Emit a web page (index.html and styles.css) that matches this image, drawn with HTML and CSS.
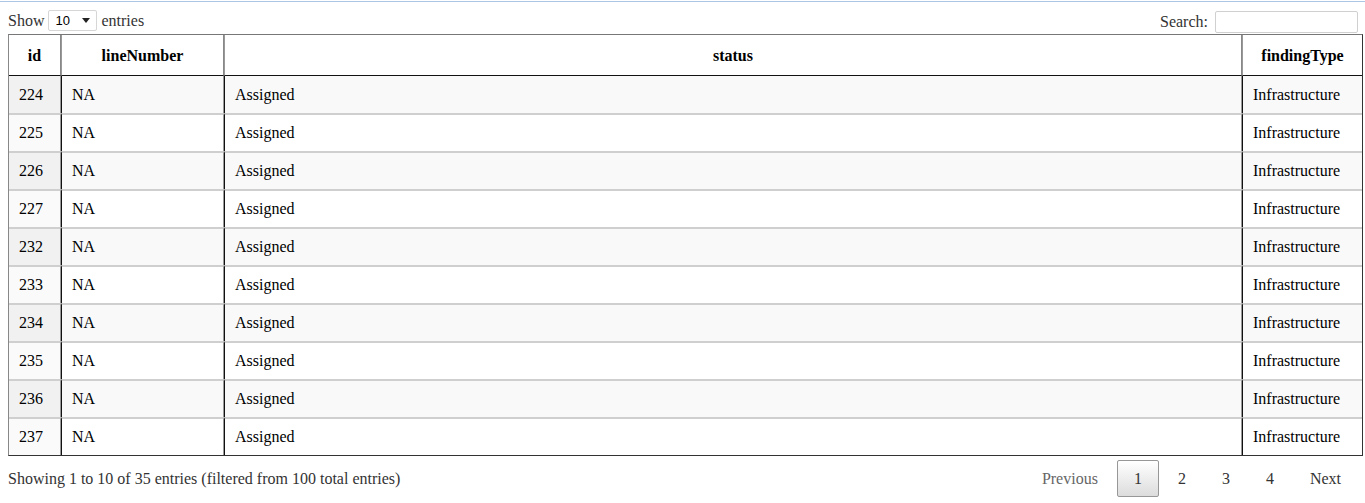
FILE: index.html
```html
<!DOCTYPE html>
<html>
<head>
<meta charset="utf-8">
<link rel="stylesheet" href="styles.css">
</head>
<body>
<div class="topline"></div>
<div class="wrap">
  <div class="controls">
    <div class="length">Show <span class="select"><span class="sel-val">10</span><svg class="caret" width="8" height="5" viewBox="0 0 8 5"><path d="M0 0H8L4 5Z" fill="#222"/></svg></span> entries</div>
    <div class="search">Search: <span class="input"></span></div>
  </div>
  <table class="dt">
    <colgroup>
      <col class="c1"><col class="c2"><col class="c3"><col class="c4">
    </colgroup>
    <thead>
      <tr><th>id</th><th>lineNumber</th><th>status</th><th>findingType</th></tr>
    </thead>
    <tbody>
      <tr class="odd"><td>224</td><td>NA</td><td>Assigned</td><td>Infrastructure</td></tr>
      <tr class="even"><td>225</td><td>NA</td><td>Assigned</td><td>Infrastructure</td></tr>
      <tr class="odd"><td>226</td><td>NA</td><td>Assigned</td><td>Infrastructure</td></tr>
      <tr class="even"><td>227</td><td>NA</td><td>Assigned</td><td>Infrastructure</td></tr>
      <tr class="odd"><td>232</td><td>NA</td><td>Assigned</td><td>Infrastructure</td></tr>
      <tr class="even"><td>233</td><td>NA</td><td>Assigned</td><td>Infrastructure</td></tr>
      <tr class="odd"><td>234</td><td>NA</td><td>Assigned</td><td>Infrastructure</td></tr>
      <tr class="even"><td>235</td><td>NA</td><td>Assigned</td><td>Infrastructure</td></tr>
      <tr class="odd"><td>236</td><td>NA</td><td>Assigned</td><td>Infrastructure</td></tr>
      <tr class="even"><td>237</td><td>NA</td><td>Assigned</td><td>Infrastructure</td></tr>
    </tbody>
  </table>
  <div class="footer">
    <div class="info">Showing 1 to 10 of 35 entries (filtered from 100 total entries)</div>
    <div class="paginate">
      <span class="pbtn disabled">Previous</span>
      <span class="pbtn current">1</span>
      <span class="pbtn">2</span>
      <span class="pbtn">3</span>
      <span class="pbtn">4</span>
      <span class="pbtn">Next</span>
    </div>
  </div>
</div>
</body>
</html>
```

FILE: styles.css
```css
html, body {
  margin: 0;
  padding: 0;
  background: #fff;
}
body {
  font-family: "Liberation Serif", "Times New Roman", serif;
  font-size: 16px;
  color: #111;
}
.topline {
  height: 1px;
  margin-top: 1px;
  background: #abc6e5;
}
.wrap {
  margin-left: 8px;
  width: 1355px;
}
.controls {
  display: flex;
  justify-content: space-between;
  align-items: center;
  height: 32px;
  padding-top: 0;
}
.length {
  display: flex;
  align-items: center;
  gap: 4px;
  color: #333;
  margin-top: 5px;
}
.select {
  display: inline-flex;
  align-items: center;
  justify-content: space-between;
  box-sizing: border-box;
  width: 49px;
  height: 21px;
  border: 1px solid #d6d6d6;
  border-radius: 2px;
  padding: 0 6px 0 6px;
  font-family: "Liberation Sans", Arial, sans-serif;
  font-size: 13px;
  color: #000;
}
.search {
  display: flex;
  align-items: center;
  gap: 7px;
  color: #333;
  margin-top: 8px;
  margin-right: 5px;
}
.input {
  display: inline-block;
  box-sizing: border-box;
  width: 143px;
  height: 22px;
  border: 1px solid #d0d0d0;
  border-radius: 2px;
}
.dt {
  width: 1355px;
  table-layout: fixed;
  border-collapse: separate;
  border-spacing: 0;
  border-top: 1px solid #777;
  border-left: 1px solid #888;
  border-right: 1px solid #333;
  border-bottom: 1px solid #333;
}
.c1 { width: 52px; }
.c2 { width: 163px; }
.c3 { width: 1018px; }
.c4 { width: 120px; }
.dt th {
  font-weight: bold;
  text-align: center;
  padding: 11px 10px 10px;
  line-height: 19px;
  border-bottom: 1px solid #111;
  border-right: 1px solid #888;
  color: #000;
}
.dt th:last-child { border-right: none; }
.dt th + th { border-left: 1px solid #999; }
.dt td {
  padding: 8px 10px;
  line-height: 20px;
  border-top: 2px solid #cfcfcf;
  border-right: 1px solid #999;
  color: #000;
  white-space: nowrap;
}
.dt td + td { border-left: 1px solid #111; }
.dt td:last-child { border-right: none; }
.dt tbody tr:first-child td { border-top: none; padding-top: 9px; padding-bottom: 8px; }
.dt tr.odd td { background: #f9f9f9; }
.dt tr.odd td:first-child { background: #f1f1f1; }
.dt tr.even td { background: #fff; }
.dt tr.even td:first-child { background: #fafafa; }
.footer {
  display: flex;
  justify-content: space-between;
  align-items: flex-start;
}
.info {
  padding-top: 14px;
  color: #333;
}
.paginate {
  display: flex;
  padding-top: 4px;
  margin-right: 5px;
}
.pbtn {
  box-sizing: border-box;
  min-width: 24px;
  padding: 8px 16px;
  line-height: 19px;
  margin-left: 2px;
  border: 1px solid transparent;
  border-radius: 2px;
  color: #333;
  text-align: center;
}
.pbtn.disabled { color: #666; }
.pbtn.current {
  border: 1px solid #979797;
  background: linear-gradient(to bottom, #fff 0%, #dcdcdc 100%);
}
```
